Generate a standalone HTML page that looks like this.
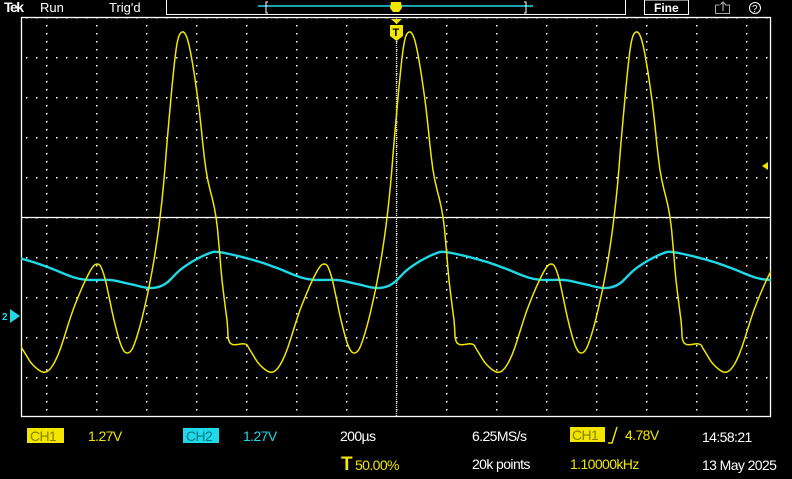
<!DOCTYPE html>
<html><head><meta charset="utf-8"><style>
html,body{margin:0;padding:0;background:#000;width:792px;height:479px;overflow:hidden}
svg{display:block}
text{font-family:"Liberation Sans",sans-serif}
</style></head><body>
<svg id="s" width="792" height="479" viewBox="0 0 792 479" xmlns="http://www.w3.org/2000/svg">
<defs>
<pattern id="vd" x="0" y="17" width="50" height="8" patternUnits="userSpaceOnUse"><rect x="46" y="0" width="1.5" height="1.5" fill="#fff"/></pattern>
<pattern id="hd" x="0" y="17" width="10" height="40" patternUnits="userSpaceOnUse"><rect x="6" y="0" width="1.5" height="1.5" fill="#fff"/></pattern>
<clipPath id="cl"><rect x="21" y="17" width="750" height="400"/></clipPath>
</defs>
<rect x="21" y="17" width="750" height="400" fill="url(#vd)"/>
<rect x="21" y="17" width="750" height="400" fill="url(#hd)"/>
<rect x="21.5" y="17.5" width="749" height="399" fill="none" stroke="#fff" stroke-width="1.3"/>
<line x1="21" y1="217.5" x2="771" y2="217.5" stroke="#fff" stroke-width="1.3"/>
<line x1="396.5" y1="17" x2="396.5" y2="417" stroke="#fff" stroke-width="1.3" stroke-dasharray="1,1"/>
<text x="4" y="12" font-size="14" font-weight="bold" fill="#fff" letter-spacing="-1.5">Tek</text>
<text x="40" y="12" font-size="13" fill="#fff">Run</text>
<text x="109" y="12" font-size="13" fill="#fff">Trig'd</text>
<path d="M166.5 0 V14.5 H625.5 V0" fill="none" stroke="#fff" stroke-width="1"/>
<line x1="258" y1="6" x2="533" y2="6" stroke="#1fd8e8" stroke-width="1.5"/>
<path d="M268 2 H266 V13 H268 M524 2 H526 V13 H524" fill="none" stroke="#fff" stroke-width="1"/>
<path d="M391 2 H401 L402 8 L399 12 H393 L390 8 Z" fill="#f2e600"/>
<rect x="644.5" y="0" width="44" height="14.5" fill="none" stroke="#fff" stroke-width="1"/>
<text x="654" y="12" font-size="12" font-weight="bold" fill="#fff">Fine</text>
<path d="M715.5 5 V13.5 H729.5 V5 H725 M719.5 5 H715.5" fill="none" stroke="#aaa" stroke-width="1"/>
<path d="M723 11 V2 M720.5 4.5 L723 2 L725.5 4.5" fill="none" stroke="#aaa" stroke-width="1.2"/>
<circle cx="755" cy="8" r="5.5" fill="none" stroke="#fff" stroke-width="1"/>
<text x="752" y="12" font-size="10" fill="#fff">?</text>
<path d="M391 19 H402 L396.5 24 Z" fill="#f2e600"/>
<path d="M390 25 H403 V36 L396.5 41 L390 36 Z" fill="#f2e600"/>
<text x="392.5" y="36" font-size="11" font-weight="bold" fill="#000">T</text>
<path d="M762 166 L768 162 V170 Z" fill="#f2e600"/>
<path d="M10 309 L20 316 L10 323 Z" fill="#1fd8e8"/>
<text x="2" y="320" font-size="10" font-weight="bold" fill="#1fd8e8">2</text>
<g clip-path="url(#cl)">
<polyline id="c2" fill="none" stroke="#1fd8e8" stroke-width="2.4" points=""/>
<polyline id="c1" fill="none" stroke="#f2e600" stroke-width="1.5" points=""/>
</g>
<g font-size="14" letter-spacing="-0.6">
<rect x="27" y="428" width="37" height="15" fill="#f2e600"/><text x="30" y="441" fill="#8a7f00">CH1</text>
<text x="88" y="441" fill="#f2e600">1.27V</text>
<rect x="183" y="428" width="36" height="15" fill="#1fd8e8"/><text x="186" y="441" fill="#0a7a88">CH2</text>
<text x="243" y="441" fill="#1fd8e8">1.27V</text>
<text x="340" y="441" fill="#fff">200µs</text>
<text x="472" y="441" fill="#fff">6.25MS/s</text>
<rect x="570" y="427" width="35" height="15" fill="#f2e600"/><text x="572" y="440" fill="#8a7f00">CH1</text>
<path d="M608 443 L612 443 L617 427" fill="none" stroke="#f2e600" stroke-width="1.4"/>
<text x="625" y="440" fill="#f2e600">4.78V</text>
<text x="702" y="442" fill="#fff">14:58:21</text>
<text x="341" y="470" font-size="19" font-weight="bold" fill="#f2e600">T</text>
<text x="355" y="470" fill="#f2e600">50.00%</text>
<text x="472" y="469" fill="#fff">20k points</text>
<text x="570" y="469" fill="#f2e600">1.10000kHz</text>
<text x="702" y="470" fill="#fff">13 May 2025</text>
</g>
</svg>
<script>
var Y=[[0,372],[12,355],[27,310],[42,275],[51,264],[58,275],[68,320],[75,345],[81,353],[88,345],[98,310],[108,260],[116,200],[123,120],[130,50],[136,32],[143,45],[152,100],[160,170],[170,217],[176,280],[181,320],[184,343],[199,344],[204,350],[214,365]];
var C=[[0,252],[20,256],[42,262],[59,268],[89,279],[119,280],[139,284],[159,288],[174,284],[189,270],[204,260],[219,253]];
function build(pts,x0,id){var A=[];for(var k=-2;k<5;k++){for(var i=0;i<pts.length;i++){A.push([x0+k*227+pts[i][0],pts[i][1]]);}}
var P=[];for(var i=1;i<A.length-2;i++){var p0=A[i-1],p1=A[i],p2=A[i+1],p3=A[i+2];
for(var t=0;t<1;t+=0.2){var t2=t*t,t3=t2*t;
var x=0.5*((2*p1[0])+(-p0[0]+p2[0])*t+(2*p0[0]-5*p1[0]+4*p2[0]-p3[0])*t2+(-p0[0]+3*p1[0]-3*p2[0]+p3[0])*t3);
var y=0.5*((2*p1[1])+(-p0[1]+p2[1])*t+(2*p0[1]-5*p1[1]+4*p2[1]-p3[1])*t2+(-p0[1]+3*p1[1]-3*p2[1]+p3[1])*t3);
if(x>0&&x<800)P.push(x.toFixed(1)+','+y.toFixed(1));}}
document.getElementById(id).setAttribute('points',P.join(' '));}
build(Y,46,'c1');build(C,218,'c2');
</script>
</body></html>
